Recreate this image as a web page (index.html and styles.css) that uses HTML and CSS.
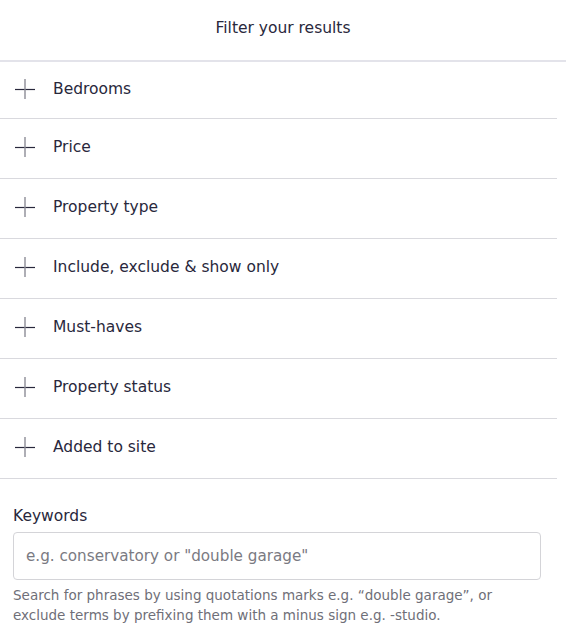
FILE: index.html
```html
<!DOCTYPE html>
<html>
<head>
<meta charset="utf-8">
<link rel="stylesheet" href="styles.css">
</head>
<body>
<div class="panel">
  <div class="header">Filter your results</div>
  <ul class="filters">
    <li class="row"><svg class="plus" viewBox="0 0 20 20" width="20" height="20"><line x1="0" y1="10.5" x2="20" y2="10.5"/><line x1="10" y1="0" x2="10" y2="20"/></svg><span>Bedrooms</span></li>
    <li class="row"><svg class="plus" viewBox="0 0 20 20" width="20" height="20"><line x1="0" y1="10.5" x2="20" y2="10.5"/><line x1="10" y1="0" x2="10" y2="20"/></svg><span>Price</span></li>
    <li class="row"><svg class="plus" viewBox="0 0 20 20" width="20" height="20"><line x1="0" y1="10.5" x2="20" y2="10.5"/><line x1="10" y1="0" x2="10" y2="20"/></svg><span>Property type</span></li>
    <li class="row"><svg class="plus" viewBox="0 0 20 20" width="20" height="20"><line x1="0" y1="10.5" x2="20" y2="10.5"/><line x1="10" y1="0" x2="10" y2="20"/></svg><span>Include, exclude &amp; show only</span></li>
    <li class="row"><svg class="plus" viewBox="0 0 20 20" width="20" height="20"><line x1="0" y1="10.5" x2="20" y2="10.5"/><line x1="10" y1="0" x2="10" y2="20"/></svg><span>Must-haves</span></li>
    <li class="row"><svg class="plus" viewBox="0 0 20 20" width="20" height="20"><line x1="0" y1="10.5" x2="20" y2="10.5"/><line x1="10" y1="0" x2="10" y2="20"/></svg><span>Property status</span></li>
    <li class="row"><svg class="plus" viewBox="0 0 20 20" width="20" height="20"><line x1="0" y1="10.5" x2="20" y2="10.5"/><line x1="10" y1="0" x2="10" y2="20"/></svg><span>Added to site</span></li>
  </ul>
  <div class="keywords">
    <label class="kw-label" for="kw">Keywords</label>
    <input id="kw" class="kw-input" type="text" placeholder="e.g. conservatory or &quot;double garage&quot;">
    <p class="kw-help">Search for phrases by using quotations marks e.g. “double garage”, or exclude terms by prefixing them with a minus sign e.g. -studio.</p>
  </div>
</div>
</body>
</html>
```

FILE: styles.css
```css
* { box-sizing: border-box; }
body {
  margin: 0;
  background: #ffffff;
  font-family: "DejaVu Sans", "Open Sans", sans-serif;
  color: #29283c;
}
.panel { width: 566px; }
.header {
  height: 62px;
  border-bottom: 2px solid #e3e3ea;
  display: flex;
  align-items: center;
  justify-content: center;
  padding-bottom: 5px;
  font-size: 15.5px;
}
.filters {
  list-style: none;
  margin: 0;
  padding: 0;
  width: 557px;
}
.row {
  height: 60px;
  border-bottom: 1px solid #d9d9de;
  display: flex;
  align-items: center;
  padding: 0 0 4px 15px;
  gap: 18px;
  font-size: 15.5px;
}
.row:first-child { height: 57px; padding-bottom: 2px; }
.plus { flex: none; }
.plus line { stroke-width: 1.2; }
.plus line:first-child { stroke: #29283c; }
.plus line:last-child { stroke: #8c8c96; stroke-width: 1.4; }
.keywords { padding: 26px 25px 0 13px; }
.kw-label {
  display: block;
  font-size: 15.5px;
  line-height: 22px;
  color: #29283c;
}
.kw-input {
  display: block;
  margin-top: 5px;
  width: 528px;
  height: 48px;
  border: 1px solid #d4d4d8;
  border-radius: 4px;
  padding: 0 12px;
  font-family: inherit;
  font-size: 15.2px;
  color: #29283c;
  outline: none;
}
.kw-input::placeholder { color: #7a7a82; }
.kw-help {
  margin: 5px 0 0;
  font-size: 13.5px;
  line-height: 20px;
  color: #6f6f78;
}
```
